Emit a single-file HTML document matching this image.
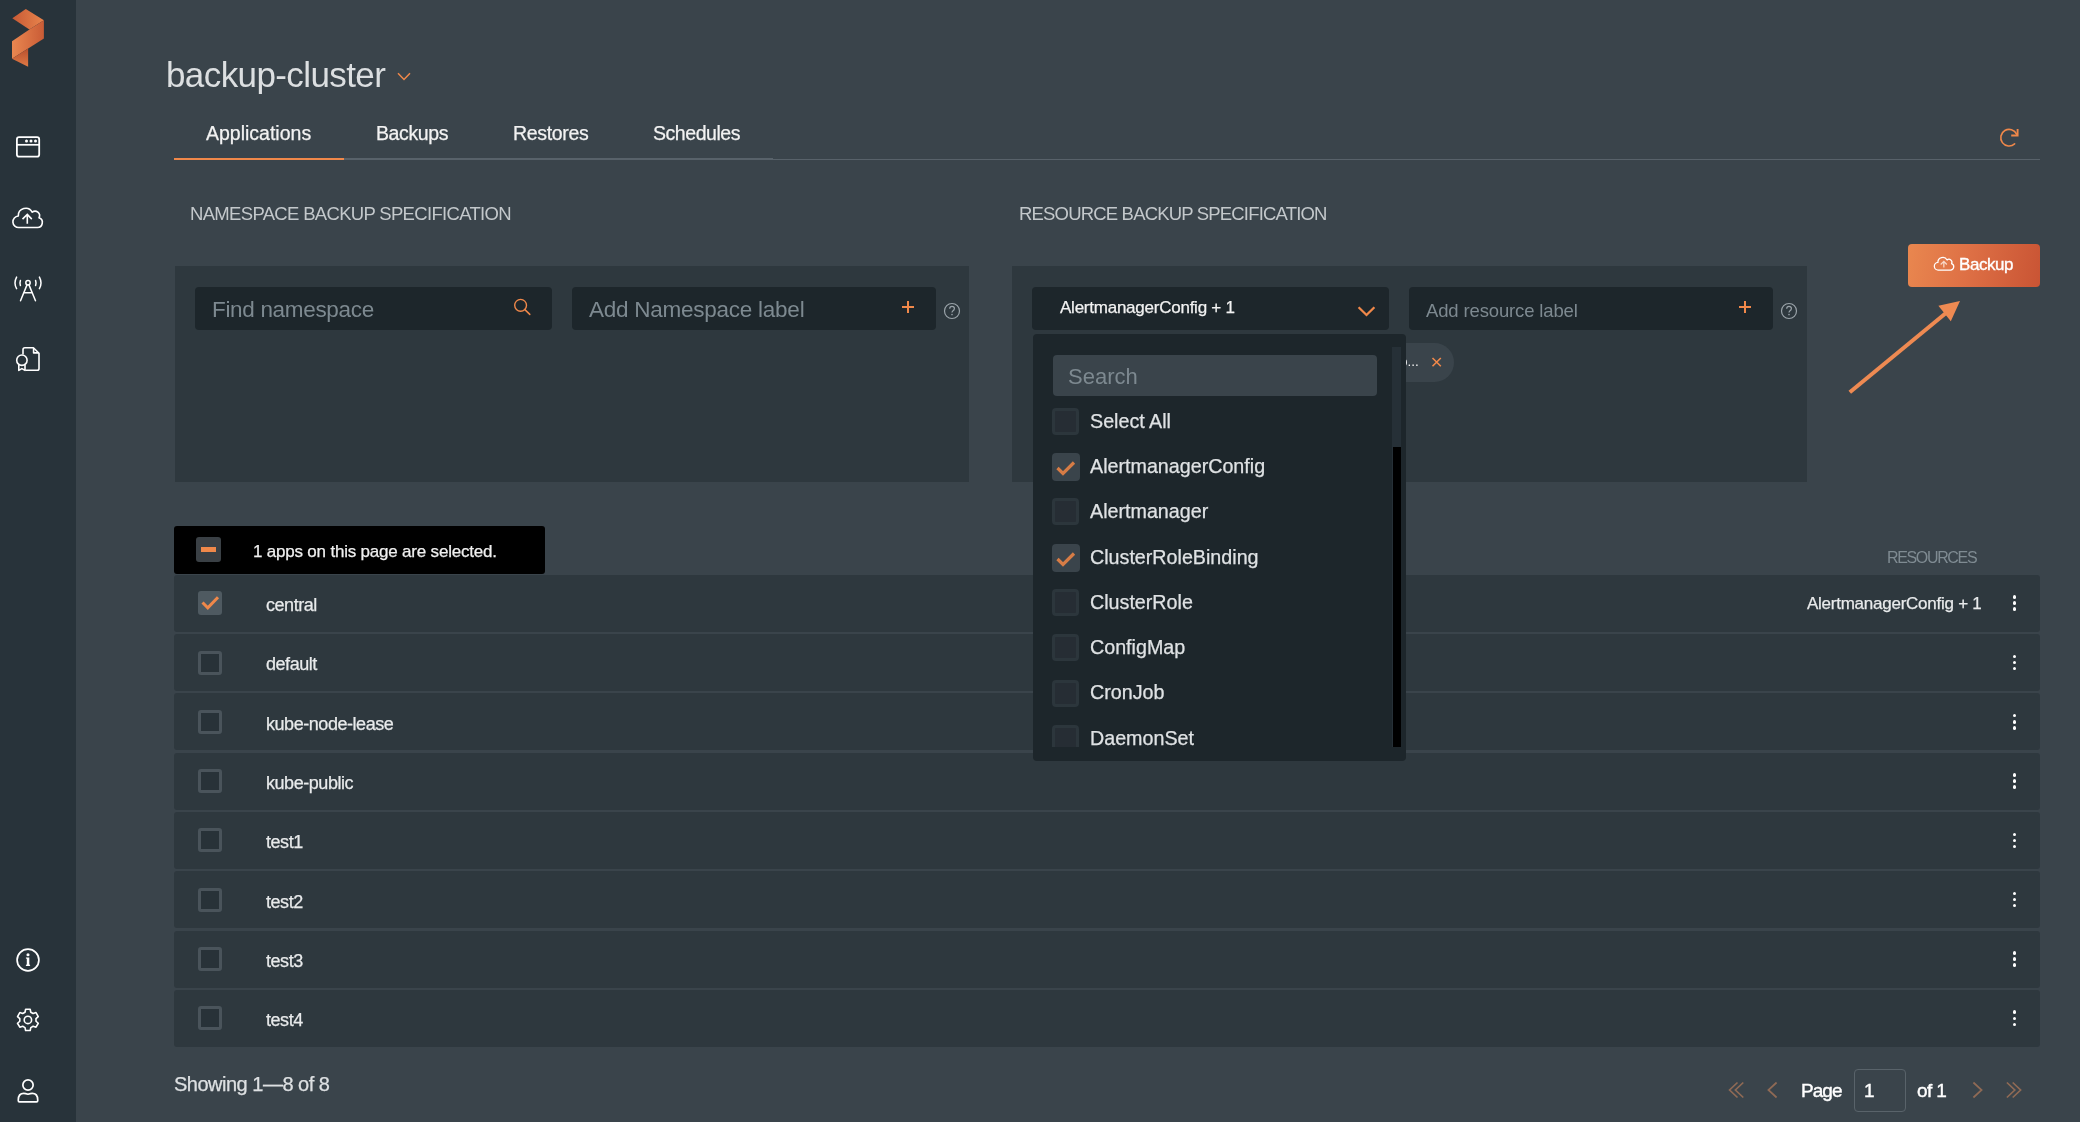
<!DOCTYPE html><html><head><meta charset="utf-8"><style>
html,body{margin:0;padding:0;width:2080px;height:1122px;overflow:hidden;background:#3a444b;font-family:"Liberation Sans",sans-serif;}
.t{position:absolute;line-height:1;white-space:nowrap;will-change:transform;}
.s{-webkit-text-stroke:0.25px currentColor;}
.r{position:absolute;}
svg{position:absolute;overflow:visible;}
</style></head><body>
<div class="r" style="left:0px;top:0px;width:76px;height:1122px;background:#28333a;border-radius:0px;"></div>
<svg style="left:0;top:0" width="76" height="80" viewBox="0 0 76 80">
<defs>
<linearGradient id="lg1" x1="0" y1="0" x2="1" y2="0"><stop offset="0" stop-color="#c85a35"/><stop offset="1" stop-color="#e8844c"/></linearGradient>
<linearGradient id="lg2" x1="0" y1="0" x2="1" y2="0"><stop offset="0" stop-color="#ea8750"/><stop offset="1" stop-color="#c95c36"/></linearGradient>
<linearGradient id="lg3" x1="0" y1="1" x2="0" y2="0"><stop offset="0" stop-color="#e07a45"/><stop offset="1" stop-color="#b9502e"/></linearGradient>
</defs>
<polygon points="12.3,18.3 25.8,8.9 43.9,20.3 29.4,29.4" fill="url(#lg1)"/>
<polygon points="12,41.2 29.4,29.4 43.9,20.3 43.9,38.5 12,58.8" fill="url(#lg2)"/>
<polygon points="12,58.8 28.1,48.6 28.1,66.8" fill="url(#lg3)"/>
</svg>
<svg style="left:0;top:120px" width="76" height="50" viewBox="0 120 76 50">
<rect x="16.9" y="137.2" width="22.3" height="19.5" rx="2.2" fill="none" stroke="#ffffff" stroke-width="1.8"/>
<line x1="16.9" y1="144.8" x2="39.2" y2="144.8" stroke="#ffffff" stroke-width="1.7"/>
<circle cx="26.5" cy="141" r="1.5" fill="#ffffff"/><circle cx="31" cy="141" r="1.5" fill="#ffffff"/><circle cx="35.5" cy="141" r="1.5" fill="#ffffff"/>
</svg>
<svg style="left:0;top:195px" width="76" height="45" viewBox="0 195 76 45">
<path d="M19,227.5 H37 A5,5 0 0 0 39,217.8 A4.5,4.5 0 0 0 32.2,212.2 A7.4,7.4 0 0 0 18.3,216 A5.6,5.6 0 0 0 19,227.5 Z" fill="none" stroke="#ffffff" stroke-width="1.6" stroke-linejoin="round"/>
<path d="M27.3,223.7 V214.8 M22.5,219.1 L27.3,214.4 L31.8,219.1" fill="none" stroke="#ffffff" stroke-width="1.6"/>
</svg>
<svg style="left:0;top:270px" width="76" height="40" viewBox="0 270 76 40">
<circle cx="28" cy="282.8" r="2.2" fill="none" stroke="#ffffff" stroke-width="1.5"/>
<path d="M26.9,285.1 L20.5,300.8 M29.1,285.1 L35.5,300.8 M24,292.8 H32" fill="none" stroke="#ffffff" stroke-width="1.5" stroke-linecap="round"/>
<path d="M16.6,277.1 Q13.4,282.9 16.6,288.7 M39.4,277.1 Q42.6,282.9 39.4,288.7" fill="none" stroke="#ffffff" stroke-width="1.5" stroke-linecap="round"/>
<path d="M20.4,280.4 Q19.5,283 20.4,285.6 M35.6,280.4 Q36.5,283 35.6,285.6" fill="none" stroke="#ffffff" stroke-width="1.5" stroke-linecap="round"/>
</svg>
<svg style="left:0;top:340px" width="76" height="40" viewBox="0 340 76 40">
<path d="M23,354.4 V349.6 Q23,347.7 24.9,347.7 H33.4 L39,353.3 V368.4 Q39,370.2 37.2,370.2 H25.4" fill="none" stroke="#ffffff" stroke-width="1.6" stroke-linejoin="round"/>
<path d="M33.6,347.9 V352.9 H38.8" fill="none" stroke="#ffffff" stroke-width="1.6" stroke-linejoin="round"/>
<circle cx="21.9" cy="360.2" r="5.2" fill="none" stroke="#ffffff" stroke-width="1.6"/>
<path d="M18.8,364.6 V370.4 L21.9,368.6 L25,370.4 V364.6" fill="none" stroke="#ffffff" stroke-width="1.6" stroke-linejoin="round"/>
</svg>
<svg style="left:0;top:940px" width="76" height="40" viewBox="0 940 76 40">
<circle cx="28" cy="960" r="10.9" fill="none" stroke="#ffffff" stroke-width="1.7"/>
<circle cx="28" cy="954.7" r="1.55" fill="#ffffff"/>
<path d="M25.9,957.5 H29.3 V963.9 L30.3,965.9 H25.7 L26.8,963.9 V958.7 L25.9,958.4 Z" fill="#ffffff"/>
</svg>
<svg style="left:0;top:1000px" width="76" height="40" viewBox="0 1000 76 40">
<polygon points="25.01,1012.23 25.63,1009.24 30.17,1009.24 30.79,1012.23 33.10,1013.56 36.00,1012.60 38.27,1016.54 35.99,1018.56 35.99,1021.24 38.27,1023.26 36.00,1027.20 33.10,1026.24 30.79,1027.57 30.17,1030.56 25.63,1030.56 25.01,1027.57 22.70,1026.24 19.80,1027.20 17.53,1023.26 19.81,1021.24 19.81,1018.56 17.53,1016.54 19.80,1012.60 22.70,1013.56" fill="none" stroke="#ffffff" stroke-width="1.6" stroke-linejoin="round"/>
<circle cx="27.9" cy="1019.9" r="3.7" fill="none" stroke="#ffffff" stroke-width="1.6"/>
</svg>
<svg style="left:0;top:1070px" width="76" height="40" viewBox="0 1070 76 40">
<circle cx="28" cy="1085" r="5.15" fill="none" stroke="#ffffff" stroke-width="1.7"/>
<path d="M19.4,1101.9 H36.6 Q37.7,1101.9 37.7,1100.7 V1099.8 Q37.7,1093.3 32.2,1093.3 Q30.6,1093.3 28,1094.2 Q25.4,1093.3 23.8,1093.3 Q18.3,1093.3 18.3,1099.8 V1100.7 Q18.3,1101.9 19.4,1101.9 Z" fill="none" stroke="#ffffff" stroke-width="1.7" stroke-linejoin="round"/>
</svg>
<div class="t " style="left:166.00px;top:57.47px;font-size:35px;color:#dcdfe1;letter-spacing:-0.600px;font-weight:400;">backup-cluster</div>
<svg style="left:390px;top:65px" width="30" height="20" viewBox="390 65 30 20">
<polyline points="398,73.2 404,79.4 410,73.2" fill="none" stroke="#f0884a" stroke-width="1.5"/></svg>
<div class="t s" style="left:205.80px;top:123.99px;font-size:19.5px;color:#f2f2f2;letter-spacing:0.000px;font-weight:400;">Applications</div>
<div class="t s" style="left:375.90px;top:123.99px;font-size:19.5px;color:#f2f2f2;letter-spacing:-0.400px;font-weight:400;">Backups</div>
<div class="t s" style="left:512.50px;top:123.99px;font-size:19.5px;color:#f2f2f2;letter-spacing:-0.330px;font-weight:400;">Restores</div>
<div class="t s" style="left:652.70px;top:123.99px;font-size:19.5px;color:#f2f2f2;letter-spacing:-0.450px;font-weight:400;">Schedules</div>
<div class="r" style="left:344px;top:158px;width:429px;height:2px;background:#58626a;border-radius:0px;"></div>
<div class="r" style="left:773px;top:159px;width:1267px;height:1px;background:#58626a;border-radius:0px;"></div>
<div class="r" style="left:174px;top:158px;width:170px;height:2px;background:#f0884a;border-radius:0px;"></div>
<svg style="left:1990px;top:120px" width="40" height="40" viewBox="1990 120 40 40">
<path d="M2014.6,143.9 A8.3,8.3 0 1 1 2016.6,134.2" fill="none" stroke="#f0884a" stroke-width="1.6" stroke-linecap="round"/>
<path d="M2017.6,129 V135.5 H2011.2" fill="none" stroke="#f0884a" stroke-width="1.9"/>
</svg>
<div class="t " style="left:190.40px;top:205.04px;font-size:18.5px;color:#c3c8cb;letter-spacing:-0.680px;font-weight:400;">NAMESPACE BACKUP SPECIFICATION</div>
<div class="t " style="left:1018.50px;top:205.04px;font-size:18.5px;color:#c3c8cb;letter-spacing:-0.820px;font-weight:400;">RESOURCE BACKUP SPECIFICATION</div>
<div class="r" style="left:175px;top:266px;width:794px;height:216px;background:#2e383e;border-radius:0px;"></div>
<div class="r" style="left:1012px;top:266px;width:794.5px;height:216px;background:#2e383e;border-radius:0px;"></div>
<div class="r" style="left:195px;top:287px;width:357px;height:43px;background:#1d262b;border-radius:4px;"></div>
<div class="t " style="left:212.00px;top:298.55px;font-size:22.5px;color:#7d8990;letter-spacing:-0.320px;font-weight:400;">Find namespace</div>
<svg style="left:505px;top:290px" width="35" height="35" viewBox="505 290 35 35">
<circle cx="520.6" cy="305.3" r="5.9" fill="none" stroke="#f0884a" stroke-width="1.4"/>
<line x1="524.9" y1="309.6" x2="529.8" y2="314.4" stroke="#f0884a" stroke-width="1.5" stroke-linecap="round"/>
</svg>
<div class="r" style="left:572px;top:287px;width:364px;height:43px;background:#1d262b;border-radius:4px;"></div>
<div class="t " style="left:588.80px;top:298.55px;font-size:22.5px;color:#7d8990;letter-spacing:-0.250px;font-weight:400;">Add Namespace label</div>
<div class="r" style="left:901.6px;top:306.2px;width:12.4px;height:2px;background:#f0884a"></div><div class="r" style="left:906.8px;top:301.0px;width:2px;height:12.4px;background:#f0884a"></div>
<svg style="left:940px;top:299px" width="24" height="24" viewBox="940 299 24 24">
<circle cx="952" cy="311" r="7.5" fill="none" stroke="#9aa3a9" stroke-width="1.2"/>
<path d="M949.7,308.8 Q949.7,306.4 952,306.4 Q954.4,306.4 954.4,308.6 Q954.4,310.1 952.8,310.9 Q952,311.4 952,312.6" fill="none" stroke="#9aa3a9" stroke-width="1.2"/>
<circle cx="952" cy="314.6" r="0.8" fill="#9aa3a9"/>
</svg>
<div class="r" style="left:1032px;top:287px;width:357px;height:43px;background:#1d262b;border-radius:4px;"></div>
<div class="t s" style="left:1059.60px;top:299.01px;font-size:17px;color:#f2f2f2;letter-spacing:-0.240px;font-weight:400;">AlertmanagerConfig + 1</div>
<svg style="left:1350px;top:295px" width="35" height="30" viewBox="1350 295 35 30">
<polyline points="1358.6,307.2 1366.5,315 1374.4,307.2" fill="none" stroke="#f0884a" stroke-width="2.3"/></svg>
<div class="r" style="left:1409px;top:287px;width:364px;height:43px;background:#1d262b;border-radius:4px;"></div>
<div class="t " style="left:1426.20px;top:301.94px;font-size:18.5px;color:#7d8990;letter-spacing:-0.140px;font-weight:400;">Add resource label</div>
<div class="r" style="left:1738.9px;top:306.2px;width:12.4px;height:2px;background:#f0884a"></div><div class="r" style="left:1744.1px;top:301.0px;width:2px;height:12.4px;background:#f0884a"></div>
<svg style="left:1777px;top:299px" width="24" height="24" viewBox="1777 299 24 24">
<circle cx="1789" cy="311" r="7.5" fill="none" stroke="#9aa3a9" stroke-width="1.2"/>
<path d="M1786.7,308.8 Q1786.7,306.4 1789,306.4 Q1791.4,306.4 1791.4,308.6 Q1791.4,310.1 1789.8,310.9 Q1789,311.4 1789,312.6" fill="none" stroke="#9aa3a9" stroke-width="1.2"/>
<circle cx="1789" cy="314.6" r="0.8" fill="#9aa3a9"/>
</svg>
<div class="r" style="left:1360px;top:343px;width:94px;height:39px;background:#3a444b;border-radius:19.5px;"></div>
<div class="t " style="left:1400.00px;top:355.27px;font-size:13.5px;color:#f2f2f2;letter-spacing:0.000px;font-weight:400;">o...</div>
<svg style="left:1425px;top:350px" width="24" height="24" viewBox="1425 350 24 24">
<path d="M1432.5,358 L1440.8,366.3 M1440.8,358 L1432.5,366.3" stroke="#f0884a" stroke-width="1.6"/></svg>
<div class="r" style="left:0;top:0;width:2080px;height:1122px;z-index:5">
<div class="r" style="left:1033px;top:334px;width:373px;height:427px;background:#1d262b;border-radius:4px;"></div>
<div class="r" style="left:1053px;top:355px;width:324px;height:41px;background:#3a444b;border-radius:4px;"></div>
<div class="t " style="left:1068.40px;top:366.18px;font-size:22px;color:#7d8990;letter-spacing:0.000px;font-weight:400;">Search</div>
<div class="r" style="left:1392px;top:347px;width:9px;height:400px;background:#263037;border-radius:0px;"></div>
<div class="r" style="left:1392.5px;top:447px;width:8.5px;height:299.5px;background:#000000;border-radius:0px;"></div>
<div class="r" style="left:1033px;top:334px;width:373px;height:413px;overflow:hidden">
<div class="r" style="left:19px;top:73.7px;width:21px;height:21px;background:#262d34;border:3.5px solid #2c363c;border-radius:4px"></div>
<div class="t s" style="left:57.20px;top:77.62px;font-size:19.7px;color:#dfe2e4;letter-spacing:0.000px;font-weight:400;">Select All</div>
<div class="r" style="left:19px;top:119.0px;width:28px;height:28px;background:#3a444b;border-radius:4px"></div>
<svg style="left:19px;top:119.0px" width="28" height="28" viewBox="0 0 28 28">
<polyline points="5.5,15 11,20.5 22,9.5" fill="none" stroke="#d67c46" stroke-width="3.2"/></svg>
<div class="t s" style="left:57.20px;top:122.92px;font-size:19.7px;color:#dfe2e4;letter-spacing:0.000px;font-weight:400;">AlertmanagerConfig</div>
<div class="r" style="left:19px;top:164.3px;width:21px;height:21px;background:#262d34;border:3.5px solid #2c363c;border-radius:4px"></div>
<div class="t s" style="left:57.20px;top:168.22px;font-size:19.7px;color:#dfe2e4;letter-spacing:0.000px;font-weight:400;">Alertmanager</div>
<div class="r" style="left:19px;top:209.6px;width:28px;height:28px;background:#3a444b;border-radius:4px"></div>
<svg style="left:19px;top:209.6px" width="28" height="28" viewBox="0 0 28 28">
<polyline points="5.5,15 11,20.5 22,9.5" fill="none" stroke="#d67c46" stroke-width="3.2"/></svg>
<div class="t s" style="left:57.20px;top:213.52px;font-size:19.7px;color:#dfe2e4;letter-spacing:0.000px;font-weight:400;">ClusterRoleBinding</div>
<div class="r" style="left:19px;top:254.9px;width:21px;height:21px;background:#262d34;border:3.5px solid #2c363c;border-radius:4px"></div>
<div class="t s" style="left:57.20px;top:258.82px;font-size:19.7px;color:#dfe2e4;letter-spacing:0.000px;font-weight:400;">ClusterRole</div>
<div class="r" style="left:19px;top:300.2px;width:21px;height:21px;background:#262d34;border:3.5px solid #2c363c;border-radius:4px"></div>
<div class="t s" style="left:57.20px;top:304.12px;font-size:19.7px;color:#dfe2e4;letter-spacing:0.000px;font-weight:400;">ConfigMap</div>
<div class="r" style="left:19px;top:345.5px;width:21px;height:21px;background:#262d34;border:3.5px solid #2c363c;border-radius:4px"></div>
<div class="t s" style="left:57.20px;top:349.42px;font-size:19.7px;color:#dfe2e4;letter-spacing:0.000px;font-weight:400;">CronJob</div>
<div class="r" style="left:19px;top:390.8px;width:21px;height:21px;background:#262d34;border:3.5px solid #2c363c;border-radius:4px"></div>
<div class="t s" style="left:57.20px;top:394.72px;font-size:19.7px;color:#dfe2e4;letter-spacing:0.000px;font-weight:400;">DaemonSet</div>
</div>
</div>
<div class="r" style="left:1908px;top:244px;width:132px;height:43px;background:linear-gradient(100deg,#e9874f 0%,#de7045 45%,#c95434 100%);border-radius:4px;"></div>
<svg style="left:1930px;top:252px" width="30" height="25" viewBox="1930 252 30 25">
<g transform="translate(1934.4,257) scale(0.66) translate(-13,-207.7)">
<path d="M19,227.5 H37 A5,5 0 0 0 39,217.8 A4.5,4.5 0 0 0 32.2,212.2 A7.4,7.4 0 0 0 18.3,216 A5.6,5.6 0 0 0 19,227.5 Z" fill="none" stroke="#ffffff" stroke-width="1.9" stroke-linejoin="round"/>
<path d="M27.3,223.7 V214.8 M22.5,219.1 L27.3,214.4 L31.8,219.1" fill="none" stroke="#f8d8c8" stroke-width="1.9"/>
</g>
</svg>
<div class="t " style="left:1959.00px;top:256.31px;font-size:17px;color:#ffffff;letter-spacing:-0.450px;font-weight:400;-webkit-text-stroke:0.35px #fff;">Backup</div>
<svg style="left:1830px;top:290px" width="140" height="115" viewBox="1830 290 140 115">
<line x1="1849.8" y1="392.2" x2="1946" y2="313" stroke="#ee8a52" stroke-width="4"/>
<polygon points="1960,301 1938.4,305.8 1950.8,321.2" fill="#ee8a52"/>
</svg>
<div class="r" style="left:174px;top:526px;width:371px;height:47.5px;background:#000000;border-radius:3px;"></div>
<div class="r" style="left:196.3px;top:537px;width:24.69999999999999px;height:24.700000000000045px;background:#3a4045;border-radius:3px;"></div>
<div class="r" style="left:200.9px;top:547.4px;width:15.400000000000006px;height:4.2000000000000455px;background:#f0884a;border-radius:0px;"></div>
<div class="t s" style="left:253.10px;top:542.61px;font-size:17px;color:#f0f0f0;letter-spacing:-0.200px;font-weight:400;">1 apps on this page are selected.</div>
<div class="t " style="right:104.00px;top:550.26px;font-size:16px;color:#7f8b92;letter-spacing:-1.350px;font-weight:400;">RESOURCES</div>
<div class="r" style="left:174px;top:574.7px;width:1866px;height:57px;background:#2e383e;border-radius:3px"></div>
<div class="r" style="left:198px;top:591.2px;width:24px;height:24px;background:#4f5a61;border-radius:3px"></div>
<svg style="left:198px;top:591.2px" width="24" height="24" viewBox="0 0 24 24">
<polyline points="4.5,11.5 9.8,16.8 20,6.3" fill="none" stroke="#f0884a" stroke-width="3"/></svg>
<div class="t s" style="right:98.70px;top:595.06px;font-size:17px;color:#e8eaeb;letter-spacing:-0.250px;font-weight:400;">AlertmanagerConfig + 1</div>
<div class="t s" style="left:266.00px;top:596.06px;font-size:18px;color:#e8eaeb;letter-spacing:-0.450px;font-weight:400;">central</div>
<div class="r" style="left:2012.95px;top:595.35px;width:3.5px;height:3.5px;background:#ffffff;border-radius:50%"></div>
<div class="r" style="left:2012.95px;top:601.45px;width:3.5px;height:3.5px;background:#ffffff;border-radius:50%"></div>
<div class="r" style="left:2012.95px;top:607.45px;width:3.5px;height:3.5px;background:#ffffff;border-radius:50%"></div>
<div class="r" style="left:174px;top:634.0px;width:1866px;height:57px;background:#2e383e;border-radius:3px"></div>
<div class="r" style="left:198px;top:650.5px;width:18px;height:18px;background:#283238;border:3px solid #4a545b;border-radius:3px"></div>
<div class="t s" style="left:266.00px;top:655.36px;font-size:18px;color:#e8eaeb;letter-spacing:-0.450px;font-weight:400;">default</div>
<div class="r" style="left:2012.95px;top:654.65px;width:3.5px;height:3.5px;background:#ffffff;border-radius:50%"></div>
<div class="r" style="left:2012.95px;top:660.75px;width:3.5px;height:3.5px;background:#ffffff;border-radius:50%"></div>
<div class="r" style="left:2012.95px;top:666.75px;width:3.5px;height:3.5px;background:#ffffff;border-radius:50%"></div>
<div class="r" style="left:174px;top:693.3px;width:1866px;height:57px;background:#2e383e;border-radius:3px"></div>
<div class="r" style="left:198px;top:709.8px;width:18px;height:18px;background:#283238;border:3px solid #4a545b;border-radius:3px"></div>
<div class="t s" style="left:266.00px;top:714.66px;font-size:18px;color:#e8eaeb;letter-spacing:-0.450px;font-weight:400;">kube-node-lease</div>
<div class="r" style="left:2012.95px;top:713.95px;width:3.5px;height:3.5px;background:#ffffff;border-radius:50%"></div>
<div class="r" style="left:2012.95px;top:720.05px;width:3.5px;height:3.5px;background:#ffffff;border-radius:50%"></div>
<div class="r" style="left:2012.95px;top:726.05px;width:3.5px;height:3.5px;background:#ffffff;border-radius:50%"></div>
<div class="r" style="left:174px;top:752.6px;width:1866px;height:57px;background:#2e383e;border-radius:3px"></div>
<div class="r" style="left:198px;top:769.1px;width:18px;height:18px;background:#283238;border:3px solid #4a545b;border-radius:3px"></div>
<div class="t s" style="left:266.00px;top:773.96px;font-size:18px;color:#e8eaeb;letter-spacing:-0.450px;font-weight:400;">kube-public</div>
<div class="r" style="left:2012.95px;top:773.25px;width:3.5px;height:3.5px;background:#ffffff;border-radius:50%"></div>
<div class="r" style="left:2012.95px;top:779.35px;width:3.5px;height:3.5px;background:#ffffff;border-radius:50%"></div>
<div class="r" style="left:2012.95px;top:785.35px;width:3.5px;height:3.5px;background:#ffffff;border-radius:50%"></div>
<div class="r" style="left:174px;top:811.9px;width:1866px;height:57px;background:#2e383e;border-radius:3px"></div>
<div class="r" style="left:198px;top:828.4px;width:18px;height:18px;background:#283238;border:3px solid #4a545b;border-radius:3px"></div>
<div class="t s" style="left:266.00px;top:833.26px;font-size:18px;color:#e8eaeb;letter-spacing:-0.450px;font-weight:400;">test1</div>
<div class="r" style="left:2012.95px;top:832.55px;width:3.5px;height:3.5px;background:#ffffff;border-radius:50%"></div>
<div class="r" style="left:2012.95px;top:838.65px;width:3.5px;height:3.5px;background:#ffffff;border-radius:50%"></div>
<div class="r" style="left:2012.95px;top:844.65px;width:3.5px;height:3.5px;background:#ffffff;border-radius:50%"></div>
<div class="r" style="left:174px;top:871.2px;width:1866px;height:57px;background:#2e383e;border-radius:3px"></div>
<div class="r" style="left:198px;top:887.7px;width:18px;height:18px;background:#283238;border:3px solid #4a545b;border-radius:3px"></div>
<div class="t s" style="left:266.00px;top:892.56px;font-size:18px;color:#e8eaeb;letter-spacing:-0.450px;font-weight:400;">test2</div>
<div class="r" style="left:2012.95px;top:891.85px;width:3.5px;height:3.5px;background:#ffffff;border-radius:50%"></div>
<div class="r" style="left:2012.95px;top:897.95px;width:3.5px;height:3.5px;background:#ffffff;border-radius:50%"></div>
<div class="r" style="left:2012.95px;top:903.95px;width:3.5px;height:3.5px;background:#ffffff;border-radius:50%"></div>
<div class="r" style="left:174px;top:930.5px;width:1866px;height:57px;background:#2e383e;border-radius:3px"></div>
<div class="r" style="left:198px;top:947.0px;width:18px;height:18px;background:#283238;border:3px solid #4a545b;border-radius:3px"></div>
<div class="t s" style="left:266.00px;top:951.86px;font-size:18px;color:#e8eaeb;letter-spacing:-0.450px;font-weight:400;">test3</div>
<div class="r" style="left:2012.95px;top:951.15px;width:3.5px;height:3.5px;background:#ffffff;border-radius:50%"></div>
<div class="r" style="left:2012.95px;top:957.25px;width:3.5px;height:3.5px;background:#ffffff;border-radius:50%"></div>
<div class="r" style="left:2012.95px;top:963.25px;width:3.5px;height:3.5px;background:#ffffff;border-radius:50%"></div>
<div class="r" style="left:174px;top:989.8px;width:1866px;height:57px;background:#2e383e;border-radius:3px"></div>
<div class="r" style="left:198px;top:1006.3px;width:18px;height:18px;background:#283238;border:3px solid #4a545b;border-radius:3px"></div>
<div class="t s" style="left:266.00px;top:1011.16px;font-size:18px;color:#e8eaeb;letter-spacing:-0.450px;font-weight:400;">test4</div>
<div class="r" style="left:2012.95px;top:1010.45px;width:3.5px;height:3.5px;background:#ffffff;border-radius:50%"></div>
<div class="r" style="left:2012.95px;top:1016.55px;width:3.5px;height:3.5px;background:#ffffff;border-radius:50%"></div>
<div class="r" style="left:2012.95px;top:1022.55px;width:3.5px;height:3.5px;background:#ffffff;border-radius:50%"></div>
<div class="t s" style="left:174.10px;top:1073.67px;font-size:20px;color:#dde0e2;letter-spacing:-0.500px;font-weight:400;">Showing 1—8 of 8</div>
<svg style="left:1720px;top:1075px" width="320" height="30" viewBox="1720 1075 320 30">
<polyline points="1737.5,1082.5 1729.6,1090 1737.5,1097.5" fill="none" stroke="#8f6a55" stroke-width="1.7"/>
<polyline points="1743.3,1082.5 1735.4,1090 1743.3,1097.5" fill="none" stroke="#8f6a55" stroke-width="1.7"/>
<polyline points="1776.6,1082.5 1768.4,1090 1776.6,1097.5" fill="none" stroke="#8f6a55" stroke-width="1.7"/>
<polyline points="1973.4,1082.5 1981.6,1090 1973.4,1097.5" fill="none" stroke="#8f6a55" stroke-width="1.7"/>
<polyline points="2006.9,1082.5 2014.8,1090 2006.9,1097.5" fill="none" stroke="#8f6a55" stroke-width="1.7"/>
<polyline points="2012.7,1082.5 2020.6,1090 2012.7,1097.5" fill="none" stroke="#8f6a55" stroke-width="1.7"/>
</svg>
<div class="t " style="left:1800.70px;top:1081.22px;font-size:19px;color:#ffffff;letter-spacing:-0.950px;font-weight:400;-webkit-text-stroke:0.4px #fff;">Page</div>
<div class="r" style="left:1853.7px;top:1069px;width:51.899999999999864px;height:42.700000000000045px;background:transparent;border-radius:4px;box-sizing:border-box;border:1px solid #59636a;"></div>
<div class="t " style="left:1864.00px;top:1081.22px;font-size:19px;color:#ffffff;letter-spacing:0.000px;font-weight:400;-webkit-text-stroke:0.4px #fff;">1</div>
<div class="t " style="left:1917.00px;top:1081.22px;font-size:19px;color:#ffffff;letter-spacing:-0.600px;font-weight:400;-webkit-text-stroke:0.4px #fff;">of 1</div>
</body></html>
